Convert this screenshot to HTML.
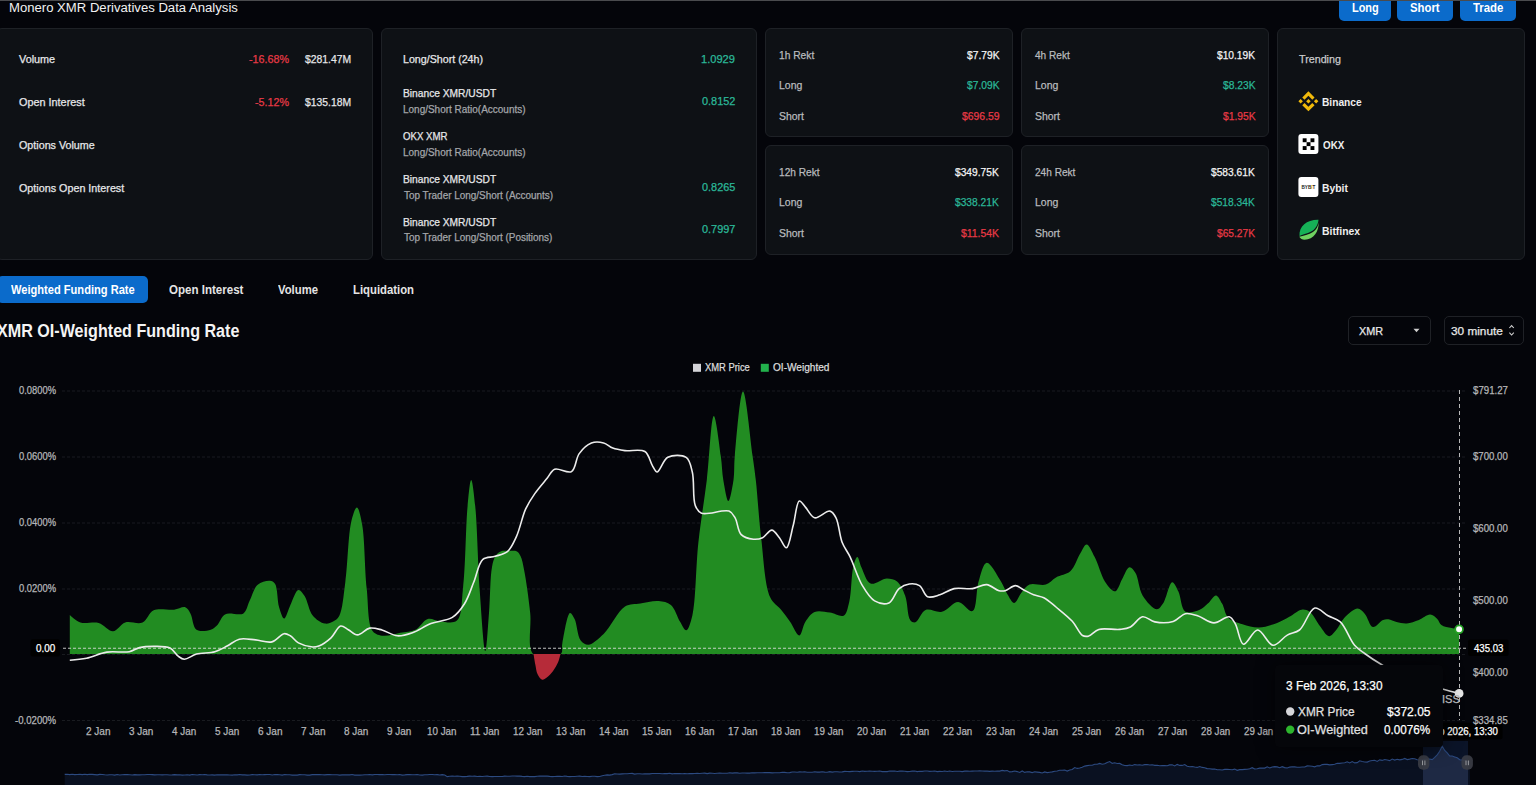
<!DOCTYPE html><html><head><meta charset="utf-8"><title>Monero XMR Derivatives Data Analysis</title><style>
html,body{margin:0;padding:0}
body{width:1536px;height:785px;background:#04050a;overflow:hidden;position:relative;font-family:"Liberation Sans",sans-serif}
.t{position:absolute;white-space:nowrap;line-height:1;transform-origin:0 0}
.card{position:absolute;background:#0e1115;border:1px solid #1e2126;border-radius:6px;box-sizing:border-box}
.btn{position:absolute;background:#0b6bcb;border-radius:5px}
svg{position:absolute;left:0;top:0}
</style></head><body>
<div class="btn" style="left:1339.4px;top:-6px;width:51.5px;height:26.8px"></div>
<div class="btn" style="left:1397.4px;top:-6px;width:55.6px;height:26.8px"></div>
<div class="btn" style="left:1459.8px;top:-6px;width:56.4px;height:26.8px"></div>
<div style="position:absolute;left:0;top:0;width:1536px;height:1px;background:#4a4b4e"></div>
<div class="card" style="left:-4px;top:28px;width:377px;height:232px"></div>
<div class="card" style="left:381px;top:28px;width:376px;height:232px"></div>
<div class="card" style="left:765px;top:28px;width:248px;height:109px"></div>
<div class="card" style="left:1021px;top:28px;width:248px;height:109px"></div>
<div class="card" style="left:765px;top:145px;width:248px;height:110px"></div>
<div class="card" style="left:1021px;top:145px;width:248px;height:110px"></div>
<div class="card" style="left:1277px;top:28px;width:248px;height:232px"></div>
<div style="position:absolute;left:-3px;top:276px;width:151px;height:27px;background:#0b6bcb;border-radius:5px"></div>
<div style="position:absolute;left:1348.4px;top:315.6px;width:82.3px;height:29px;border:1px solid #1f2126;border-radius:5px;box-sizing:border-box"></div>
<div style="position:absolute;left:1444.3px;top:315.6px;width:80.1px;height:29px;border:1px solid #1f2126;border-radius:5px;box-sizing:border-box"></div>
<svg width="1536" height="785" viewBox="0 0 1536 785"><path d="M1413.5 328.8 L1419.5 328.8 L1416.5 332.2 Z" fill="#cfcfcf"/><path d="M1509.4 328 L1511.6 325.6 L1513.8 328 M1509.4 332.6 L1511.6 335 L1513.8 332.6" fill="none" stroke="#cfcfcf" stroke-width="1.1"/><g transform="translate(1298.40,91.30) scale(0.15797)" fill="#f0b90b"><path d="M38.73 53.2l24.59-24.58 24.6 24.6 14.3-14.31L63.32 0 24.42 38.9zM0 63.31l14.3-14.31 14.31 14.31-14.31 14.3zM38.73 73.41l24.59 24.59 24.6-24.6 14.31 14.29-38.9 38.91-38.91-38.88zM98 63.31l14.3-14.31 14.31 14.3-14.31 14.32z"/><path d="M77.83 63.3L63.32 48.78 52.59 59.51l-1.24 1.23-2.54 2.54 14.51 14.5 14.51-14.47z"/></g><rect x="1298.4" y="134" width="20" height="20" rx="3" fill="#ffffff"/><rect x="1302.7" y="138.3" width="3.9" height="3.9" fill="#000"/><rect x="1310.5" y="138.3" width="3.9" height="3.9" fill="#000"/><rect x="1306.6" y="142.2" width="3.9" height="3.9" fill="#000"/><rect x="1302.7" y="146.1" width="3.9" height="3.9" fill="#000"/><rect x="1310.5" y="146.1" width="3.9" height="3.9" fill="#000"/><rect x="1298.4" y="177" width="20" height="20" rx="3" fill="#ffffff"/><text x="1308.4" y="189" font-family="Liberation Sans" font-weight="700" font-size="4.6" fill="#1b1b1b" text-anchor="middle">BYB<tspan fill="#f7a600">I</tspan>T</text><path d="M1299.5 236 C1299 226 1307 219.5 1318.5 219.8 C1318 226.5 1314 231 1308 233 C1304.5 234.2 1301.5 235 1299.5 236 Z" fill="#16b157"/><path d="M1299.2 236.8 C1303 236 1309 234.6 1313 232 C1316.5 229.5 1318.3 226 1318.6 222.5 C1319 231 1314 239.5 1304.5 239.8 C1302.3 239.8 1300.5 238.5 1299.2 236.8 Z" fill="#6fd160"/></svg>
<svg width="1536" height="785" viewBox="0 0 1536 785"><line x1="62" y1="391" x2="1465" y2="391" stroke="#191b20" stroke-width="1" stroke-dasharray="3 2"/><line x1="62" y1="457" x2="1465" y2="457" stroke="#191b20" stroke-width="1" stroke-dasharray="3 2"/><line x1="62" y1="523" x2="1465" y2="523" stroke="#191b20" stroke-width="1" stroke-dasharray="3 2"/><line x1="62" y1="589" x2="1465" y2="589" stroke="#191b20" stroke-width="1" stroke-dasharray="3 2"/><line x1="62" y1="654.5" x2="1465" y2="654.5" stroke="#191b20" stroke-width="1" stroke-dasharray="3 2"/><line x1="62" y1="720.5" x2="1465" y2="720.5" stroke="#191b20" stroke-width="1" stroke-dasharray="3 2"/><path d="M69.8 615.0C69.8 615.0 76.1 621.1 80.4 622.5C85.5 624.2 93.2 621.4 98.7 623.0C104.0 624.5 108.5 631.5 113.0 631.3C117.3 631.1 120.5 624.0 125.2 622.5C130.2 620.9 137.7 624.6 142.5 622.5C147.2 620.4 148.8 612.5 153.7 610.3C159.1 607.8 168.3 610.4 174.1 609.7C178.4 609.2 182.5 606.3 185.3 607.3C187.6 608.1 188.8 610.7 190.4 613.4C192.7 617.4 192.8 627.1 196.5 629.7C199.9 632.0 207.2 630.8 210.8 629.7C213.4 628.9 214.9 627.5 216.9 625.6C219.7 622.9 221.1 616.5 225.0 614.4C229.5 611.9 239.3 616.1 243.4 613.4C246.9 611.1 247.3 605.5 249.5 601.1C252.0 596.0 253.8 588.1 257.7 584.8C261.0 582.0 266.8 580.5 269.9 580.8C272.0 581.0 273.6 581.8 275.0 583.8C277.7 587.7 277.2 600.9 279.1 607.2C280.5 611.8 282.4 618.5 284.2 618.5C286.1 618.5 288.1 609.8 290.3 605.2C292.7 600.2 295.6 590.3 298.4 589.9C300.4 589.6 302.7 593.1 304.6 596.0C307.6 600.5 308.8 610.7 312.7 615.4C315.9 619.4 321.1 622.9 324.9 623.6C327.8 624.1 330.7 622.8 333.1 621.5C335.5 620.2 337.5 619.0 339.2 615.9C342.6 609.7 343.5 595.2 345.3 582.3C347.7 565.0 348.2 534.1 351.4 521.1C353.0 514.7 355.2 507.3 356.9 507.4C358.8 507.5 360.7 516.7 362.1 524.2C364.8 538.6 364.6 569.2 366.7 588.4C368.4 604.1 367.6 624.4 372.8 631.2C375.5 634.7 379.5 635.3 383.5 635.8C388.4 636.3 394.8 633.7 400.3 632.7C405.5 631.7 411.1 631.9 415.6 629.7C420.2 627.4 423.4 620.2 427.8 619.0C431.7 618.0 435.7 621.1 440.1 621.4C445.2 621.8 453.0 623.9 456.9 620.5C462.3 615.8 461.4 601.6 463.0 588.4C465.6 567.3 465.7 525.6 467.6 505.9C468.7 494.8 469.9 479.9 471.2 479.9C472.5 479.9 474.0 494.7 475.2 505.9C477.3 526.1 477.9 565.6 479.8 591.5C481.4 613.2 483.6 651.1 485.3 651.1C486.6 651.1 487.9 626.2 489.0 612.9C490.2 598.3 490.1 577.0 492.0 567.0C492.9 562.0 493.7 558.7 495.5 556.0C497.0 553.8 499.0 552.1 501.2 551.3C503.5 550.4 506.4 551.0 509.0 551.0C511.5 551.0 514.5 550.3 516.5 551.3C518.3 552.2 519.4 553.8 520.5 556.0C522.2 559.3 522.9 564.1 524.1 570.1C526.2 580.5 528.7 598.8 530.2 612.9C531.7 626.7 526.7 647.8 533.3 654.0C538.7 659.0 556.8 657.5 560.8 654.0C563.3 651.8 561.4 647.8 562.3 643.4C563.8 635.8 567.1 613.5 570.0 612.9C571.4 612.6 573.2 616.2 574.6 619.0C577.0 623.8 577.4 636.2 580.7 640.4C582.7 643.0 585.4 644.8 588.3 644.7C592.6 644.5 598.4 638.9 603.6 634.0C610.6 627.3 617.6 611.1 625.0 606.5C630.0 603.4 634.9 604.3 640.3 603.4C646.1 602.4 653.2 600.5 658.7 601.0C663.2 601.4 667.5 602.2 670.9 605.0C675.0 608.4 677.2 617.2 680.1 621.8C682.2 625.2 684.3 630.5 686.2 630.3C688.5 630.0 690.6 622.6 692.3 615.7C695.9 600.8 695.8 565.7 698.4 542.3C700.8 520.7 704.2 500.9 706.8 480.0C709.4 458.8 711.1 416.1 713.8 416.0C715.9 415.9 719.2 444.3 720.8 456.0C722.1 465.0 722.0 472.3 723.3 480.0C724.6 487.3 726.7 501.0 728.4 501.0C730.1 501.0 732.4 487.3 733.5 480.0C734.6 472.3 733.9 465.9 734.8 456.0C736.3 439.7 740.0 391.5 743.0 391.5C746.0 391.5 750.3 439.7 752.6 456.0C754.0 465.9 754.7 470.3 755.8 480.0C757.5 494.8 758.7 517.1 761.0 536.2C763.4 556.2 764.6 585.2 770.2 597.3C773.1 603.5 777.5 605.4 780.9 609.5C784.2 613.5 787.1 617.5 790.1 621.8C793.2 626.2 796.7 635.7 799.3 635.5C801.8 635.3 802.7 625.8 805.4 621.8C807.9 618.0 810.7 613.6 814.6 612.0C818.8 610.3 825.0 612.0 829.9 612.6C834.6 613.2 840.4 617.4 843.6 615.7C846.9 614.0 847.7 607.7 849.2 601.9C851.5 593.1 851.2 575.3 853.2 567.3C854.3 562.8 855.9 557.1 857.3 557.1C858.7 557.1 859.6 563.6 861.4 567.3C863.7 572.2 866.2 581.9 870.6 583.6C874.8 585.3 882.1 578.5 886.9 578.5C890.7 578.5 894.2 579.2 897.1 581.5C900.6 584.3 903.1 590.2 905.2 595.8C907.8 602.7 907.3 616.6 910.3 620.2C911.7 621.9 913.6 622.8 915.4 622.3C918.5 621.5 921.2 611.8 925.6 610.0C930.0 608.2 936.7 612.9 941.9 611.7C947.6 610.4 953.0 601.8 958.2 601.9C963.1 602.0 969.1 612.5 972.5 611.1C977.0 609.2 975.9 590.1 978.6 581.5C980.8 574.4 983.2 563.2 986.7 562.8C990.5 562.3 997.4 575.8 1001.0 581.5C1003.7 585.9 1004.8 590.0 1007.1 593.7C1009.2 597.1 1011.9 602.9 1014.2 602.9C1016.6 602.8 1018.8 595.8 1021.4 592.7C1023.9 589.7 1026.0 586.1 1029.5 584.6C1033.7 582.8 1041.2 586.1 1045.8 584.6C1049.8 583.3 1052.2 579.5 1056.0 577.4C1060.3 575.0 1066.4 574.8 1070.3 571.3C1074.8 567.2 1077.4 557.9 1080.5 553.0C1082.7 549.5 1084.5 544.3 1086.6 544.4C1089.2 544.5 1092.1 552.0 1094.7 557.1C1098.2 563.8 1101.1 575.5 1104.9 581.5C1107.5 585.6 1110.8 589.6 1113.1 590.7C1114.2 591.2 1115.1 591.5 1116.1 590.9C1118.2 589.7 1120.0 583.0 1122.2 579.1C1124.4 575.1 1126.9 567.6 1129.4 567.3C1131.4 567.0 1133.7 570.1 1135.5 573.0C1138.5 577.8 1138.8 589.2 1142.6 595.4C1146.1 601.1 1153.1 609.3 1156.9 609.3C1159.3 609.3 1161.0 606.4 1163.0 603.6C1166.3 598.9 1169.2 582.5 1172.2 582.2C1174.3 582.0 1176.4 587.5 1178.3 591.3C1181.0 596.6 1181.1 609.1 1185.4 611.7C1188.9 613.8 1195.8 611.3 1199.7 609.7C1203.0 608.3 1205.2 605.9 1207.8 603.6C1210.6 601.2 1213.6 595.2 1216.0 595.4C1218.3 595.6 1220.2 600.4 1222.1 603.6C1224.4 607.6 1224.8 614.4 1228.2 617.8C1231.6 621.3 1237.5 622.7 1242.5 624.3C1247.7 626.0 1253.2 627.7 1258.8 627.6C1264.7 627.4 1271.7 624.9 1277.1 622.9C1281.7 621.2 1285.3 619.0 1289.3 616.8C1293.4 614.6 1297.8 610.2 1301.6 609.7C1304.5 609.3 1307.1 610.0 1309.7 611.7C1313.4 614.2 1316.5 621.7 1319.9 626.0C1322.9 629.8 1326.1 636.0 1329.1 636.2C1331.5 636.3 1333.9 632.6 1336.2 630.0C1339.1 626.8 1340.9 621.3 1344.4 617.8C1348.0 614.1 1353.9 608.6 1357.6 608.6C1360.3 608.6 1362.5 611.3 1364.7 613.7C1367.7 616.9 1369.6 626.3 1372.9 627.0C1375.8 627.6 1380.1 621.0 1383.1 619.9C1385.0 619.2 1386.5 619.1 1388.4 619.3C1390.8 619.6 1393.6 621.3 1396.5 622.0C1399.7 622.7 1403.2 623.6 1406.7 623.4C1410.6 623.1 1415.0 621.5 1418.9 620.0C1422.8 618.5 1426.9 614.3 1430.2 614.5C1432.9 614.6 1435.4 617.1 1437.3 618.9C1439.1 620.6 1439.4 623.6 1441.4 625.1C1443.8 626.9 1448.4 627.4 1451.6 628.1C1454.3 628.7 1459.1 629.1 1459.1 629.1 L1459.1 654 L69.8 654 Z" fill="#228c22"/><path d="M533.6 654.0C533.6 654.0 534.6 661.0 535.3 664.4C536.0 667.8 536.3 671.6 537.6 674.3C538.7 676.5 540.5 679.4 542.2 679.7C543.6 680.0 545.3 678.5 546.8 677.4C548.8 676.0 551.1 673.7 552.9 671.3C554.9 668.7 556.9 665.1 558.2 662.1C559.3 659.4 560.5 654.0 560.5 654.0 Z" fill="#b62b39"/><path d="M69.8 660.2C69.8 660.2 80.7 659.4 86.5 658.2C93.0 656.8 99.9 653.2 106.9 652.1C114.1 651.0 123.4 652.9 129.3 651.7C133.5 650.9 135.7 648.5 139.5 647.6C143.8 646.6 148.8 646.4 153.7 646.4C158.9 646.4 165.8 646.0 170.0 648.0C173.6 649.7 175.5 654.3 178.2 656.2C180.3 657.7 181.9 659.1 184.3 659.2C187.6 659.3 191.9 655.3 196.5 654.1C201.9 652.6 209.5 653.3 214.9 651.7C219.5 650.4 223.1 648.1 227.1 646.0C231.2 643.9 234.8 640.3 239.3 639.2C244.2 638.0 250.2 639.5 255.6 639.9C261.0 640.4 267.0 643.1 271.9 641.9C276.5 640.8 280.7 634.1 284.2 633.7C286.5 633.4 288.2 634.6 290.3 635.8C293.0 637.3 295.1 641.1 298.4 642.9C302.3 645.0 308.9 646.8 312.7 647.0C315.1 647.1 316.5 646.9 318.8 646.0C322.3 644.6 327.4 641.1 331.0 637.8C334.7 634.4 337.4 626.7 340.7 626.0C343.2 625.5 345.7 628.3 348.3 629.7C351.2 631.2 354.2 634.9 357.5 634.9C361.3 634.9 365.5 628.9 369.7 628.1C373.7 627.4 377.7 628.9 382.0 630.0C386.9 631.3 392.1 635.4 397.3 635.8C402.3 636.2 407.3 634.5 412.5 632.7C418.5 630.7 424.4 626.1 430.9 623.6C437.7 621.0 446.6 621.0 452.3 617.4C457.5 614.1 461.1 609.1 464.5 603.7C468.4 597.6 470.7 589.6 473.7 582.3C476.8 574.8 478.3 563.4 482.9 559.4C486.2 556.5 491.1 557.6 495.1 556.3C499.2 555.0 503.9 554.5 507.3 551.7C511.3 548.4 513.7 542.4 516.5 536.4C520.0 528.7 522.2 516.6 525.7 508.9C528.5 502.9 531.3 498.6 534.8 493.6C538.4 488.4 543.5 482.7 547.1 478.3C549.9 474.9 551.2 470.5 554.7 469.2C558.9 467.6 567.4 473.9 571.5 471.6C575.9 469.2 575.6 458.5 579.2 453.6C582.4 449.1 587.0 444.6 591.4 442.9C595.2 441.5 599.9 441.9 603.6 442.9C607.0 443.8 609.4 446.8 612.8 448.1C616.5 449.5 620.4 450.0 625.0 450.6C630.8 451.3 640.3 448.6 644.9 451.5C649.1 454.1 650.1 462.2 652.5 465.9C654.1 468.4 655.3 472.0 657.1 472.0C659.9 472.0 663.0 459.8 667.8 457.3C672.7 454.8 682.1 454.6 686.2 457.3C690.0 459.8 690.8 466.0 692.3 472.0C694.5 480.8 692.5 498.6 695.3 505.6C696.8 509.4 698.2 511.8 701.5 513.2C707.1 515.6 723.4 508.9 729.0 511.1C732.2 512.4 733.3 514.8 735.1 517.8C737.6 522.0 737.7 531.1 741.2 534.6C744.2 537.6 749.6 538.8 753.4 539.2C756.6 539.5 759.7 539.0 762.6 537.7C765.9 536.2 768.9 530.0 771.8 530.1C774.5 530.2 777.0 534.9 779.4 537.7C781.9 540.7 784.4 548.1 786.4 547.8C789.2 547.4 791.1 533.1 793.2 525.5C795.4 517.6 796.4 501.8 799.3 501.0C801.0 500.5 803.2 504.7 805.4 507.1C808.2 510.1 810.8 516.9 814.6 517.8C818.8 518.8 826.1 510.3 829.9 511.1C832.7 511.7 834.3 514.6 836.0 517.8C838.9 523.2 839.4 535.3 842.1 542.3C844.3 548.0 847.4 551.3 850.2 557.1C854.0 565.0 857.7 577.8 862.4 585.6C866.1 591.8 869.7 598.1 874.6 600.9C878.8 603.3 884.9 604.6 888.9 602.9C893.3 601.0 895.2 591.8 899.1 588.6C902.2 586.1 905.8 584.5 909.3 584.0C912.6 583.6 916.6 583.8 919.5 585.6C922.9 587.7 924.1 595.3 927.6 596.8C931.0 598.2 935.7 596.0 939.9 594.8C944.5 593.4 948.9 589.7 954.1 588.6C959.7 587.4 966.8 589.4 972.5 588.6C977.6 587.9 982.2 584.2 986.7 584.6C991.0 585.0 995.5 589.9 999.0 590.7C1001.3 591.2 1002.9 591.2 1005.1 590.7C1008.1 590.0 1012.1 585.6 1015.3 585.6C1018.2 585.6 1020.5 588.3 1023.4 589.7C1026.6 591.3 1030.1 593.4 1033.6 594.8C1036.9 596.1 1040.4 596.1 1043.8 597.8C1047.9 599.8 1051.7 603.5 1056.0 607.0C1061.1 611.2 1067.7 616.3 1072.3 621.3C1076.4 625.8 1079.1 633.5 1082.5 635.5C1084.5 636.7 1086.4 636.6 1088.6 636.1C1091.7 635.3 1094.6 630.7 1098.8 629.4C1104.4 627.7 1114.2 630.1 1120.0 629.4C1124.1 628.9 1127.0 628.7 1130.4 627.0C1134.6 624.9 1138.3 617.4 1142.6 616.8C1146.5 616.2 1150.2 621.0 1154.8 621.9C1160.2 622.9 1167.9 623.1 1173.2 621.5C1177.9 620.1 1181.2 614.6 1185.4 613.7C1189.3 612.9 1193.3 614.5 1197.6 615.8C1202.7 617.3 1208.5 622.8 1213.9 622.9C1219.1 623.0 1225.5 615.9 1229.2 616.8C1232.0 617.5 1233.4 620.7 1235.3 623.9C1238.3 628.8 1239.6 643.5 1243.5 644.3C1247.2 645.0 1252.9 630.0 1257.7 630.0C1262.7 630.0 1267.8 644.9 1273.0 645.3C1277.7 645.7 1282.6 637.7 1287.3 635.1C1291.4 632.8 1295.6 633.1 1299.5 630.0C1305.0 625.6 1309.3 609.2 1314.8 608.0C1319.0 607.1 1323.7 613.4 1328.1 615.8C1332.2 618.0 1336.5 618.4 1340.3 621.9C1345.7 626.8 1349.8 639.8 1354.6 645.3C1357.9 649.1 1360.9 650.7 1364.7 653.5C1369.4 657.0 1374.7 660.5 1381.0 664.3C1389.2 669.2 1399.7 675.9 1410.0 680.0C1420.5 684.2 1434.3 686.9 1443.4 689.3C1449.6 691.0 1459.1 693.4 1459.1 693.4" fill="none" stroke="#ececec" stroke-width="1.6" stroke-linejoin="round"/><line x1="63" y1="648.3" x2="1466" y2="648.3" stroke="#e0e0e0" stroke-opacity="0.85" stroke-width="1.1" stroke-dasharray="3 2"/><line x1="1459.5" y1="390" x2="1459.5" y2="720" stroke="#b8b8b8" stroke-width="1" stroke-dasharray="4 3"/><circle cx="1459.1" cy="629.3" r="3.9" fill="#ffffff" stroke="#23a023" stroke-width="1.8"/><circle cx="1459.1" cy="693.4" r="4.4" fill="#e6e6e6"/><rect x="693" y="363.8" width="8" height="8" fill="#d4d4d8"/><rect x="760.8" y="363.8" width="8" height="8" fill="#22b14c"/><path d="M64.7 774.4 L67.2 774.3 L69.7 774.6 L72.2 774.2 L74.7 774.6 L77.2 774.5 L79.7 774.3 L82.2 774.6 L84.7 774.3 L87.2 774.6 L89.7 774.3 L92.2 774.4 L94.7 774.6 L97.2 774.9 L99.7 774.4 L102.2 774.5 L104.7 774.8 L107.2 775.0 L109.7 774.8 L112.2 774.7 L114.7 775.1 L117.2 774.5 L119.7 775.0 L122.2 774.7 L124.7 774.6 L127.2 774.5 L129.7 774.7 L132.2 775.0 L134.7 774.6 L137.2 774.9 L139.7 774.9 L142.2 774.7 L144.7 774.8 L147.2 774.5 L149.7 774.5 L152.2 774.6 L154.7 774.9 L157.2 774.7 L159.7 774.7 L162.2 774.9 L164.7 774.8 L167.2 774.7 L169.7 775.0 L172.2 774.9 L174.7 774.6 L177.2 774.9 L179.7 774.8 L182.2 775.1 L184.7 775.0 L187.2 774.7 L189.7 775.1 L192.2 774.5 L194.7 774.7 L197.2 775.0 L199.7 774.6 L202.2 774.8 L204.7 774.5 L207.2 774.9 L209.7 775.0 L212.2 774.9 L214.7 775.1 L217.2 774.7 L219.7 774.9 L222.2 774.9 L224.7 774.9 L227.2 774.8 L229.7 775.0 L232.2 775.1 L234.7 774.8 L237.2 774.9 L239.7 774.5 L242.2 774.9 L244.7 774.9 L247.2 775.1 L249.7 775.0 L252.2 774.6 L254.7 774.7 L257.2 774.9 L259.7 774.5 L262.2 774.8 L264.7 774.6 L267.2 774.5 L269.7 774.5 L272.2 775.0 L274.7 774.5 L277.2 774.6 L279.7 774.7 L282.2 775.1 L284.7 774.5 L287.2 774.8 L289.7 774.8 L292.2 775.1 L294.7 775.0 L297.2 775.1 L299.7 774.6 L302.2 774.7 L304.7 774.7 L307.2 775.1 L309.7 775.1 L312.2 774.6 L314.7 774.6 L317.2 774.6 L319.7 774.6 L322.2 774.8 L324.7 774.9 L327.2 774.6 L329.7 774.5 L332.2 774.7 L334.7 774.7 L337.2 774.8 L339.7 775.1 L342.2 774.9 L344.7 774.8 L347.2 774.9 L349.7 774.9 L352.2 774.5 L354.7 775.1 L357.2 775.0 L359.7 775.1 L362.2 775.0 L364.7 774.7 L367.2 774.7 L369.7 774.5 L372.2 774.9 L374.7 774.5 L377.2 774.5 L379.7 774.6 L382.2 774.6 L384.7 774.7 L387.2 774.5 L389.7 774.5 L392.2 774.6 L394.7 774.5 L397.2 774.7 L399.7 774.5 L402.2 775.1 L404.7 774.9 L407.2 774.6 L409.7 774.6 L412.2 774.7 L414.7 774.7 L417.2 774.5 L419.7 775.0 L422.2 775.1 L424.7 774.8 L427.2 774.8 L429.7 774.5 L432.2 774.5 L434.7 774.7 L437.2 774.6 L439.7 775.0 L442.2 774.6 L444.7 775.0 L447.2 776.6 L449.7 776.3 L452.2 776.1 L454.7 776.3 L457.2 776.0 L459.7 776.3 L462.2 776.6 L464.7 776.6 L467.2 776.4 L469.7 776.1 L472.2 776.2 L474.7 776.1 L477.2 776.5 L479.7 776.3 L482.2 776.5 L484.7 776.2 L487.2 776.1 L489.7 776.5 L492.2 776.6 L494.7 776.5 L497.2 776.5 L499.7 776.5 L502.2 776.5 L504.7 776.1 L507.2 776.3 L509.7 776.2 L512.2 776.0 L514.7 776.0 L517.2 776.1 L519.7 776.1 L522.2 776.4 L524.7 776.6 L527.2 776.3 L529.7 776.6 L532.2 776.6 L534.7 776.6 L537.2 776.2 L539.7 776.1 L542.2 776.1 L544.7 776.1 L547.2 776.1 L549.7 776.4 L552.2 776.6 L554.7 776.5 L557.2 776.3 L559.7 776.4 L562.2 776.5 L564.7 776.0 L567.2 776.4 L569.7 776.6 L572.2 776.5 L574.7 776.5 L577.2 776.3 L579.7 776.1 L582.2 776.5 L584.7 776.2 L587.2 776.5 L589.7 776.6 L592.2 776.2 L594.7 776.2 L597.2 776.6 L599.7 776.5 L602.2 775.7 L604.7 775.3 L607.2 774.9 L609.7 775.1 L612.2 774.6 L614.7 773.8 L617.2 774.0 L619.7 774.1 L622.2 773.9 L624.7 773.7 L627.2 773.8 L629.7 773.5 L632.2 773.4 L634.7 774.1 L637.2 773.8 L639.7 773.7 L642.2 774.0 L644.7 773.7 L647.2 773.9 L649.7 773.9 L652.2 773.5 L654.7 773.5 L657.2 773.5 L659.7 773.5 L662.2 773.7 L664.7 773.5 L667.2 773.6 L669.7 773.3 L672.2 773.9 L674.7 773.5 L677.2 773.6 L679.7 773.6 L682.2 773.8 L684.7 773.5 L687.2 773.8 L689.7 773.5 L692.2 773.6 L694.7 773.5 L697.2 773.2 L699.7 773.5 L702.2 773.2 L704.7 773.1 L707.2 773.6 L709.7 773.1 L712.2 773.3 L714.7 773.5 L717.2 773.3 L719.7 773.1 L722.2 773.2 L724.7 773.2 L727.2 773.3 L729.7 772.8 L732.2 773.1 L734.7 772.9 L737.2 772.9 L739.7 773.2 L742.2 773.0 L744.7 773.0 L747.2 773.1 L749.7 773.1 L752.2 772.8 L754.7 772.9 L757.2 772.8 L759.7 772.7 L762.2 772.8 L764.7 772.6 L767.2 772.6 L769.7 772.6 L772.2 772.9 L774.7 772.7 L777.2 772.8 L779.7 772.8 L782.2 772.3 L784.7 772.4 L787.2 772.7 L789.7 772.6 L792.2 772.0 L794.7 772.0 L797.2 772.2 L799.7 771.9 L802.2 772.0 L804.7 771.8 L807.2 772.2 L809.7 772.3 L812.2 772.3 L814.7 771.8 L817.2 772.1 L819.7 772.1 L822.2 771.7 L824.7 772.1 L827.2 772.2 L829.7 771.6 L832.2 772.1 L834.7 771.7 L837.2 771.7 L839.7 772.0 L842.2 771.9 L844.7 771.4 L847.2 771.5 L849.7 771.6 L852.2 771.4 L854.7 771.3 L857.2 771.3 L859.7 771.6 L862.2 771.0 L864.7 771.4 L867.2 771.3 L869.7 771.0 L872.2 771.2 L874.7 771.4 L877.2 771.3 L879.7 771.0 L882.2 771.6 L884.7 771.5 L887.2 771.6 L889.7 771.0 L892.2 771.1 L894.7 771.0 L897.2 771.5 L899.7 771.1 L902.2 771.0 L904.7 771.2 L907.2 771.6 L909.7 771.5 L912.2 771.1 L914.7 771.0 L917.2 771.6 L919.7 771.3 L922.2 771.4 L924.7 771.0 L927.2 771.0 L929.7 771.4 L932.2 771.2 L934.7 771.0 L937.2 771.6 L939.7 771.4 L942.2 771.5 L944.7 771.0 L947.2 771.5 L949.7 771.0 L952.2 771.5 L954.7 771.2 L957.2 771.2 L959.7 771.3 L962.2 771.6 L964.7 771.1 L967.2 771.0 L969.7 771.3 L972.2 771.1 L974.7 771.0 L977.2 771.0 L979.7 770.9 L982.2 771.0 L984.7 771.1 L987.2 771.1 L989.7 771.4 L992.2 771.1 L994.7 771.3 L997.2 771.0 L999.7 771.1 L1002.2 770.4 L1004.7 770.9 L1007.2 770.5 L1009.7 771.9 L1012.2 771.6 L1014.7 771.0 L1017.2 771.6 L1019.7 772.5 L1022.2 771.0 L1024.7 772.4 L1027.2 771.7 L1029.7 771.9 L1032.2 772.6 L1034.7 771.8 L1037.2 772.1 L1039.7 772.4 L1042.2 773.0 L1044.7 771.9 L1047.2 772.6 L1049.7 772.2 L1052.2 771.9 L1054.7 771.3 L1057.2 771.0 L1059.7 770.3 L1062.2 770.3 L1064.7 770.0 L1067.2 771.1 L1069.7 770.0 L1072.2 769.5 L1074.7 767.6 L1077.2 768.4 L1079.7 768.0 L1082.2 767.2 L1084.7 766.1 L1087.2 765.6 L1089.7 765.3 L1092.2 765.2 L1094.7 764.2 L1097.2 764.2 L1099.7 763.4 L1102.2 764.2 L1104.7 763.7 L1107.2 762.4 L1109.7 761.5 L1112.2 763.4 L1114.7 762.8 L1117.2 763.5 L1119.7 763.4 L1122.2 764.7 L1124.7 765.5 L1127.2 765.6 L1129.7 765.0 L1132.2 765.5 L1134.7 764.6 L1137.2 765.0 L1139.7 764.7 L1142.2 765.2 L1144.7 764.6 L1147.2 764.5 L1149.7 765.0 L1152.2 764.8 L1154.7 765.4 L1157.2 765.3 L1159.7 765.7 L1162.2 765.5 L1164.7 765.6 L1167.2 765.8 L1169.7 764.9 L1172.2 764.8 L1174.7 765.9 L1177.2 764.4 L1179.7 765.4 L1182.2 765.4 L1184.7 764.6 L1187.2 766.3 L1189.7 766.7 L1192.2 766.5 L1194.7 767.0 L1197.2 767.4 L1199.7 766.5 L1202.2 767.4 L1204.7 767.7 L1207.2 768.6 L1209.7 768.8 L1212.2 769.1 L1214.7 769.0 L1217.2 769.8 L1219.7 769.7 L1222.2 770.0 L1224.7 769.4 L1227.2 769.4 L1229.7 769.5 L1232.2 769.8 L1234.7 769.1 L1237.2 770.3 L1239.7 769.6 L1242.2 769.6 L1244.7 769.4 L1247.2 769.3 L1249.7 768.8 L1252.2 767.7 L1254.7 769.0 L1257.2 768.7 L1259.7 768.1 L1262.2 768.0 L1264.7 768.1 L1267.2 766.8 L1269.7 767.9 L1272.2 767.0 L1274.7 766.6 L1277.2 766.9 L1279.7 767.7 L1282.2 766.7 L1284.7 767.6 L1287.2 768.0 L1289.7 767.1 L1292.2 766.8 L1294.7 766.9 L1297.2 767.2 L1299.7 767.3 L1302.2 767.0 L1304.7 767.0 L1307.2 765.9 L1309.7 766.0 L1312.2 766.2 L1314.7 766.8 L1317.2 765.7 L1319.7 765.9 L1322.2 764.6 L1324.7 764.4 L1327.2 764.4 L1329.7 764.9 L1332.2 764.6 L1334.7 764.3 L1337.2 763.3 L1339.7 763.4 L1342.2 763.0 L1344.7 762.7 L1347.2 761.8 L1349.7 763.0 L1352.2 761.6 L1354.7 762.9 L1357.2 762.6 L1359.7 760.8 L1362.2 761.5 L1364.7 762.0 L1367.2 762.1 L1369.7 761.0 L1372.2 760.5 L1374.7 760.2 L1377.2 761.4 L1379.7 759.9 L1382.2 760.4 L1384.7 759.5 L1387.2 760.0 L1389.7 760.6 L1392.2 759.0 L1394.7 760.1 L1397.2 759.3 L1399.7 759.9 L1402.2 759.4 L1404.7 758.4 L1407.2 759.6 L1409.7 759.1 L1412.2 758.5 L1414.7 758.7 L1417.2 759.8 L1419.7 760.0 L1422.2 759.9 L1424.7 759.3 L1427.2 759.4 L1429.7 759.0 L1432.2 759.6 L1434.7 757.4 L1437.2 754.9 L1439.7 751.3 L1442.2 746.2 L1444.7 750.5 L1447.2 752.9 L1449.7 756.0 L1452.2 756.0 L1454.7 756.9 L1457.2 757.8 L1459.7 759.8 L1462.2 760.0 L1464.7 760.6 L1467.2 761.8 L1469.7 761.6 L1470 785 L64.7 785 Z" fill="#0a1121"/><clipPath id="selc"><rect x="1423" y="740" width="45" height="45"/></clipPath><rect x="1423" y="741" width="45" height="44" fill="#0b1428"/><path d="M64.7 774.4 L67.2 774.3 L69.7 774.6 L72.2 774.2 L74.7 774.6 L77.2 774.5 L79.7 774.3 L82.2 774.6 L84.7 774.3 L87.2 774.6 L89.7 774.3 L92.2 774.4 L94.7 774.6 L97.2 774.9 L99.7 774.4 L102.2 774.5 L104.7 774.8 L107.2 775.0 L109.7 774.8 L112.2 774.7 L114.7 775.1 L117.2 774.5 L119.7 775.0 L122.2 774.7 L124.7 774.6 L127.2 774.5 L129.7 774.7 L132.2 775.0 L134.7 774.6 L137.2 774.9 L139.7 774.9 L142.2 774.7 L144.7 774.8 L147.2 774.5 L149.7 774.5 L152.2 774.6 L154.7 774.9 L157.2 774.7 L159.7 774.7 L162.2 774.9 L164.7 774.8 L167.2 774.7 L169.7 775.0 L172.2 774.9 L174.7 774.6 L177.2 774.9 L179.7 774.8 L182.2 775.1 L184.7 775.0 L187.2 774.7 L189.7 775.1 L192.2 774.5 L194.7 774.7 L197.2 775.0 L199.7 774.6 L202.2 774.8 L204.7 774.5 L207.2 774.9 L209.7 775.0 L212.2 774.9 L214.7 775.1 L217.2 774.7 L219.7 774.9 L222.2 774.9 L224.7 774.9 L227.2 774.8 L229.7 775.0 L232.2 775.1 L234.7 774.8 L237.2 774.9 L239.7 774.5 L242.2 774.9 L244.7 774.9 L247.2 775.1 L249.7 775.0 L252.2 774.6 L254.7 774.7 L257.2 774.9 L259.7 774.5 L262.2 774.8 L264.7 774.6 L267.2 774.5 L269.7 774.5 L272.2 775.0 L274.7 774.5 L277.2 774.6 L279.7 774.7 L282.2 775.1 L284.7 774.5 L287.2 774.8 L289.7 774.8 L292.2 775.1 L294.7 775.0 L297.2 775.1 L299.7 774.6 L302.2 774.7 L304.7 774.7 L307.2 775.1 L309.7 775.1 L312.2 774.6 L314.7 774.6 L317.2 774.6 L319.7 774.6 L322.2 774.8 L324.7 774.9 L327.2 774.6 L329.7 774.5 L332.2 774.7 L334.7 774.7 L337.2 774.8 L339.7 775.1 L342.2 774.9 L344.7 774.8 L347.2 774.9 L349.7 774.9 L352.2 774.5 L354.7 775.1 L357.2 775.0 L359.7 775.1 L362.2 775.0 L364.7 774.7 L367.2 774.7 L369.7 774.5 L372.2 774.9 L374.7 774.5 L377.2 774.5 L379.7 774.6 L382.2 774.6 L384.7 774.7 L387.2 774.5 L389.7 774.5 L392.2 774.6 L394.7 774.5 L397.2 774.7 L399.7 774.5 L402.2 775.1 L404.7 774.9 L407.2 774.6 L409.7 774.6 L412.2 774.7 L414.7 774.7 L417.2 774.5 L419.7 775.0 L422.2 775.1 L424.7 774.8 L427.2 774.8 L429.7 774.5 L432.2 774.5 L434.7 774.7 L437.2 774.6 L439.7 775.0 L442.2 774.6 L444.7 775.0 L447.2 776.6 L449.7 776.3 L452.2 776.1 L454.7 776.3 L457.2 776.0 L459.7 776.3 L462.2 776.6 L464.7 776.6 L467.2 776.4 L469.7 776.1 L472.2 776.2 L474.7 776.1 L477.2 776.5 L479.7 776.3 L482.2 776.5 L484.7 776.2 L487.2 776.1 L489.7 776.5 L492.2 776.6 L494.7 776.5 L497.2 776.5 L499.7 776.5 L502.2 776.5 L504.7 776.1 L507.2 776.3 L509.7 776.2 L512.2 776.0 L514.7 776.0 L517.2 776.1 L519.7 776.1 L522.2 776.4 L524.7 776.6 L527.2 776.3 L529.7 776.6 L532.2 776.6 L534.7 776.6 L537.2 776.2 L539.7 776.1 L542.2 776.1 L544.7 776.1 L547.2 776.1 L549.7 776.4 L552.2 776.6 L554.7 776.5 L557.2 776.3 L559.7 776.4 L562.2 776.5 L564.7 776.0 L567.2 776.4 L569.7 776.6 L572.2 776.5 L574.7 776.5 L577.2 776.3 L579.7 776.1 L582.2 776.5 L584.7 776.2 L587.2 776.5 L589.7 776.6 L592.2 776.2 L594.7 776.2 L597.2 776.6 L599.7 776.5 L602.2 775.7 L604.7 775.3 L607.2 774.9 L609.7 775.1 L612.2 774.6 L614.7 773.8 L617.2 774.0 L619.7 774.1 L622.2 773.9 L624.7 773.7 L627.2 773.8 L629.7 773.5 L632.2 773.4 L634.7 774.1 L637.2 773.8 L639.7 773.7 L642.2 774.0 L644.7 773.7 L647.2 773.9 L649.7 773.9 L652.2 773.5 L654.7 773.5 L657.2 773.5 L659.7 773.5 L662.2 773.7 L664.7 773.5 L667.2 773.6 L669.7 773.3 L672.2 773.9 L674.7 773.5 L677.2 773.6 L679.7 773.6 L682.2 773.8 L684.7 773.5 L687.2 773.8 L689.7 773.5 L692.2 773.6 L694.7 773.5 L697.2 773.2 L699.7 773.5 L702.2 773.2 L704.7 773.1 L707.2 773.6 L709.7 773.1 L712.2 773.3 L714.7 773.5 L717.2 773.3 L719.7 773.1 L722.2 773.2 L724.7 773.2 L727.2 773.3 L729.7 772.8 L732.2 773.1 L734.7 772.9 L737.2 772.9 L739.7 773.2 L742.2 773.0 L744.7 773.0 L747.2 773.1 L749.7 773.1 L752.2 772.8 L754.7 772.9 L757.2 772.8 L759.7 772.7 L762.2 772.8 L764.7 772.6 L767.2 772.6 L769.7 772.6 L772.2 772.9 L774.7 772.7 L777.2 772.8 L779.7 772.8 L782.2 772.3 L784.7 772.4 L787.2 772.7 L789.7 772.6 L792.2 772.0 L794.7 772.0 L797.2 772.2 L799.7 771.9 L802.2 772.0 L804.7 771.8 L807.2 772.2 L809.7 772.3 L812.2 772.3 L814.7 771.8 L817.2 772.1 L819.7 772.1 L822.2 771.7 L824.7 772.1 L827.2 772.2 L829.7 771.6 L832.2 772.1 L834.7 771.7 L837.2 771.7 L839.7 772.0 L842.2 771.9 L844.7 771.4 L847.2 771.5 L849.7 771.6 L852.2 771.4 L854.7 771.3 L857.2 771.3 L859.7 771.6 L862.2 771.0 L864.7 771.4 L867.2 771.3 L869.7 771.0 L872.2 771.2 L874.7 771.4 L877.2 771.3 L879.7 771.0 L882.2 771.6 L884.7 771.5 L887.2 771.6 L889.7 771.0 L892.2 771.1 L894.7 771.0 L897.2 771.5 L899.7 771.1 L902.2 771.0 L904.7 771.2 L907.2 771.6 L909.7 771.5 L912.2 771.1 L914.7 771.0 L917.2 771.6 L919.7 771.3 L922.2 771.4 L924.7 771.0 L927.2 771.0 L929.7 771.4 L932.2 771.2 L934.7 771.0 L937.2 771.6 L939.7 771.4 L942.2 771.5 L944.7 771.0 L947.2 771.5 L949.7 771.0 L952.2 771.5 L954.7 771.2 L957.2 771.2 L959.7 771.3 L962.2 771.6 L964.7 771.1 L967.2 771.0 L969.7 771.3 L972.2 771.1 L974.7 771.0 L977.2 771.0 L979.7 770.9 L982.2 771.0 L984.7 771.1 L987.2 771.1 L989.7 771.4 L992.2 771.1 L994.7 771.3 L997.2 771.0 L999.7 771.1 L1002.2 770.4 L1004.7 770.9 L1007.2 770.5 L1009.7 771.9 L1012.2 771.6 L1014.7 771.0 L1017.2 771.6 L1019.7 772.5 L1022.2 771.0 L1024.7 772.4 L1027.2 771.7 L1029.7 771.9 L1032.2 772.6 L1034.7 771.8 L1037.2 772.1 L1039.7 772.4 L1042.2 773.0 L1044.7 771.9 L1047.2 772.6 L1049.7 772.2 L1052.2 771.9 L1054.7 771.3 L1057.2 771.0 L1059.7 770.3 L1062.2 770.3 L1064.7 770.0 L1067.2 771.1 L1069.7 770.0 L1072.2 769.5 L1074.7 767.6 L1077.2 768.4 L1079.7 768.0 L1082.2 767.2 L1084.7 766.1 L1087.2 765.6 L1089.7 765.3 L1092.2 765.2 L1094.7 764.2 L1097.2 764.2 L1099.7 763.4 L1102.2 764.2 L1104.7 763.7 L1107.2 762.4 L1109.7 761.5 L1112.2 763.4 L1114.7 762.8 L1117.2 763.5 L1119.7 763.4 L1122.2 764.7 L1124.7 765.5 L1127.2 765.6 L1129.7 765.0 L1132.2 765.5 L1134.7 764.6 L1137.2 765.0 L1139.7 764.7 L1142.2 765.2 L1144.7 764.6 L1147.2 764.5 L1149.7 765.0 L1152.2 764.8 L1154.7 765.4 L1157.2 765.3 L1159.7 765.7 L1162.2 765.5 L1164.7 765.6 L1167.2 765.8 L1169.7 764.9 L1172.2 764.8 L1174.7 765.9 L1177.2 764.4 L1179.7 765.4 L1182.2 765.4 L1184.7 764.6 L1187.2 766.3 L1189.7 766.7 L1192.2 766.5 L1194.7 767.0 L1197.2 767.4 L1199.7 766.5 L1202.2 767.4 L1204.7 767.7 L1207.2 768.6 L1209.7 768.8 L1212.2 769.1 L1214.7 769.0 L1217.2 769.8 L1219.7 769.7 L1222.2 770.0 L1224.7 769.4 L1227.2 769.4 L1229.7 769.5 L1232.2 769.8 L1234.7 769.1 L1237.2 770.3 L1239.7 769.6 L1242.2 769.6 L1244.7 769.4 L1247.2 769.3 L1249.7 768.8 L1252.2 767.7 L1254.7 769.0 L1257.2 768.7 L1259.7 768.1 L1262.2 768.0 L1264.7 768.1 L1267.2 766.8 L1269.7 767.9 L1272.2 767.0 L1274.7 766.6 L1277.2 766.9 L1279.7 767.7 L1282.2 766.7 L1284.7 767.6 L1287.2 768.0 L1289.7 767.1 L1292.2 766.8 L1294.7 766.9 L1297.2 767.2 L1299.7 767.3 L1302.2 767.0 L1304.7 767.0 L1307.2 765.9 L1309.7 766.0 L1312.2 766.2 L1314.7 766.8 L1317.2 765.7 L1319.7 765.9 L1322.2 764.6 L1324.7 764.4 L1327.2 764.4 L1329.7 764.9 L1332.2 764.6 L1334.7 764.3 L1337.2 763.3 L1339.7 763.4 L1342.2 763.0 L1344.7 762.7 L1347.2 761.8 L1349.7 763.0 L1352.2 761.6 L1354.7 762.9 L1357.2 762.6 L1359.7 760.8 L1362.2 761.5 L1364.7 762.0 L1367.2 762.1 L1369.7 761.0 L1372.2 760.5 L1374.7 760.2 L1377.2 761.4 L1379.7 759.9 L1382.2 760.4 L1384.7 759.5 L1387.2 760.0 L1389.7 760.6 L1392.2 759.0 L1394.7 760.1 L1397.2 759.3 L1399.7 759.9 L1402.2 759.4 L1404.7 758.4 L1407.2 759.6 L1409.7 759.1 L1412.2 758.5 L1414.7 758.7 L1417.2 759.8 L1419.7 760.0 L1422.2 759.9 L1424.7 759.3 L1427.2 759.4 L1429.7 759.0 L1432.2 759.6 L1434.7 757.4 L1437.2 754.9 L1439.7 751.3 L1442.2 746.2 L1444.7 750.5 L1447.2 752.9 L1449.7 756.0 L1452.2 756.0 L1454.7 756.9 L1457.2 757.8 L1459.7 759.8 L1462.2 760.0 L1464.7 760.6 L1467.2 761.8 L1469.7 761.6 L1470 785 L64.7 785 Z" fill="#1e2944" clip-path="url(#selc)"/><path d="M64.7 774.4 L67.2 774.3 L69.7 774.6 L72.2 774.2 L74.7 774.6 L77.2 774.5 L79.7 774.3 L82.2 774.6 L84.7 774.3 L87.2 774.6 L89.7 774.3 L92.2 774.4 L94.7 774.6 L97.2 774.9 L99.7 774.4 L102.2 774.5 L104.7 774.8 L107.2 775.0 L109.7 774.8 L112.2 774.7 L114.7 775.1 L117.2 774.5 L119.7 775.0 L122.2 774.7 L124.7 774.6 L127.2 774.5 L129.7 774.7 L132.2 775.0 L134.7 774.6 L137.2 774.9 L139.7 774.9 L142.2 774.7 L144.7 774.8 L147.2 774.5 L149.7 774.5 L152.2 774.6 L154.7 774.9 L157.2 774.7 L159.7 774.7 L162.2 774.9 L164.7 774.8 L167.2 774.7 L169.7 775.0 L172.2 774.9 L174.7 774.6 L177.2 774.9 L179.7 774.8 L182.2 775.1 L184.7 775.0 L187.2 774.7 L189.7 775.1 L192.2 774.5 L194.7 774.7 L197.2 775.0 L199.7 774.6 L202.2 774.8 L204.7 774.5 L207.2 774.9 L209.7 775.0 L212.2 774.9 L214.7 775.1 L217.2 774.7 L219.7 774.9 L222.2 774.9 L224.7 774.9 L227.2 774.8 L229.7 775.0 L232.2 775.1 L234.7 774.8 L237.2 774.9 L239.7 774.5 L242.2 774.9 L244.7 774.9 L247.2 775.1 L249.7 775.0 L252.2 774.6 L254.7 774.7 L257.2 774.9 L259.7 774.5 L262.2 774.8 L264.7 774.6 L267.2 774.5 L269.7 774.5 L272.2 775.0 L274.7 774.5 L277.2 774.6 L279.7 774.7 L282.2 775.1 L284.7 774.5 L287.2 774.8 L289.7 774.8 L292.2 775.1 L294.7 775.0 L297.2 775.1 L299.7 774.6 L302.2 774.7 L304.7 774.7 L307.2 775.1 L309.7 775.1 L312.2 774.6 L314.7 774.6 L317.2 774.6 L319.7 774.6 L322.2 774.8 L324.7 774.9 L327.2 774.6 L329.7 774.5 L332.2 774.7 L334.7 774.7 L337.2 774.8 L339.7 775.1 L342.2 774.9 L344.7 774.8 L347.2 774.9 L349.7 774.9 L352.2 774.5 L354.7 775.1 L357.2 775.0 L359.7 775.1 L362.2 775.0 L364.7 774.7 L367.2 774.7 L369.7 774.5 L372.2 774.9 L374.7 774.5 L377.2 774.5 L379.7 774.6 L382.2 774.6 L384.7 774.7 L387.2 774.5 L389.7 774.5 L392.2 774.6 L394.7 774.5 L397.2 774.7 L399.7 774.5 L402.2 775.1 L404.7 774.9 L407.2 774.6 L409.7 774.6 L412.2 774.7 L414.7 774.7 L417.2 774.5 L419.7 775.0 L422.2 775.1 L424.7 774.8 L427.2 774.8 L429.7 774.5 L432.2 774.5 L434.7 774.7 L437.2 774.6 L439.7 775.0 L442.2 774.6 L444.7 775.0 L447.2 776.6 L449.7 776.3 L452.2 776.1 L454.7 776.3 L457.2 776.0 L459.7 776.3 L462.2 776.6 L464.7 776.6 L467.2 776.4 L469.7 776.1 L472.2 776.2 L474.7 776.1 L477.2 776.5 L479.7 776.3 L482.2 776.5 L484.7 776.2 L487.2 776.1 L489.7 776.5 L492.2 776.6 L494.7 776.5 L497.2 776.5 L499.7 776.5 L502.2 776.5 L504.7 776.1 L507.2 776.3 L509.7 776.2 L512.2 776.0 L514.7 776.0 L517.2 776.1 L519.7 776.1 L522.2 776.4 L524.7 776.6 L527.2 776.3 L529.7 776.6 L532.2 776.6 L534.7 776.6 L537.2 776.2 L539.7 776.1 L542.2 776.1 L544.7 776.1 L547.2 776.1 L549.7 776.4 L552.2 776.6 L554.7 776.5 L557.2 776.3 L559.7 776.4 L562.2 776.5 L564.7 776.0 L567.2 776.4 L569.7 776.6 L572.2 776.5 L574.7 776.5 L577.2 776.3 L579.7 776.1 L582.2 776.5 L584.7 776.2 L587.2 776.5 L589.7 776.6 L592.2 776.2 L594.7 776.2 L597.2 776.6 L599.7 776.5 L602.2 775.7 L604.7 775.3 L607.2 774.9 L609.7 775.1 L612.2 774.6 L614.7 773.8 L617.2 774.0 L619.7 774.1 L622.2 773.9 L624.7 773.7 L627.2 773.8 L629.7 773.5 L632.2 773.4 L634.7 774.1 L637.2 773.8 L639.7 773.7 L642.2 774.0 L644.7 773.7 L647.2 773.9 L649.7 773.9 L652.2 773.5 L654.7 773.5 L657.2 773.5 L659.7 773.5 L662.2 773.7 L664.7 773.5 L667.2 773.6 L669.7 773.3 L672.2 773.9 L674.7 773.5 L677.2 773.6 L679.7 773.6 L682.2 773.8 L684.7 773.5 L687.2 773.8 L689.7 773.5 L692.2 773.6 L694.7 773.5 L697.2 773.2 L699.7 773.5 L702.2 773.2 L704.7 773.1 L707.2 773.6 L709.7 773.1 L712.2 773.3 L714.7 773.5 L717.2 773.3 L719.7 773.1 L722.2 773.2 L724.7 773.2 L727.2 773.3 L729.7 772.8 L732.2 773.1 L734.7 772.9 L737.2 772.9 L739.7 773.2 L742.2 773.0 L744.7 773.0 L747.2 773.1 L749.7 773.1 L752.2 772.8 L754.7 772.9 L757.2 772.8 L759.7 772.7 L762.2 772.8 L764.7 772.6 L767.2 772.6 L769.7 772.6 L772.2 772.9 L774.7 772.7 L777.2 772.8 L779.7 772.8 L782.2 772.3 L784.7 772.4 L787.2 772.7 L789.7 772.6 L792.2 772.0 L794.7 772.0 L797.2 772.2 L799.7 771.9 L802.2 772.0 L804.7 771.8 L807.2 772.2 L809.7 772.3 L812.2 772.3 L814.7 771.8 L817.2 772.1 L819.7 772.1 L822.2 771.7 L824.7 772.1 L827.2 772.2 L829.7 771.6 L832.2 772.1 L834.7 771.7 L837.2 771.7 L839.7 772.0 L842.2 771.9 L844.7 771.4 L847.2 771.5 L849.7 771.6 L852.2 771.4 L854.7 771.3 L857.2 771.3 L859.7 771.6 L862.2 771.0 L864.7 771.4 L867.2 771.3 L869.7 771.0 L872.2 771.2 L874.7 771.4 L877.2 771.3 L879.7 771.0 L882.2 771.6 L884.7 771.5 L887.2 771.6 L889.7 771.0 L892.2 771.1 L894.7 771.0 L897.2 771.5 L899.7 771.1 L902.2 771.0 L904.7 771.2 L907.2 771.6 L909.7 771.5 L912.2 771.1 L914.7 771.0 L917.2 771.6 L919.7 771.3 L922.2 771.4 L924.7 771.0 L927.2 771.0 L929.7 771.4 L932.2 771.2 L934.7 771.0 L937.2 771.6 L939.7 771.4 L942.2 771.5 L944.7 771.0 L947.2 771.5 L949.7 771.0 L952.2 771.5 L954.7 771.2 L957.2 771.2 L959.7 771.3 L962.2 771.6 L964.7 771.1 L967.2 771.0 L969.7 771.3 L972.2 771.1 L974.7 771.0 L977.2 771.0 L979.7 770.9 L982.2 771.0 L984.7 771.1 L987.2 771.1 L989.7 771.4 L992.2 771.1 L994.7 771.3 L997.2 771.0 L999.7 771.1 L1002.2 770.4 L1004.7 770.9 L1007.2 770.5 L1009.7 771.9 L1012.2 771.6 L1014.7 771.0 L1017.2 771.6 L1019.7 772.5 L1022.2 771.0 L1024.7 772.4 L1027.2 771.7 L1029.7 771.9 L1032.2 772.6 L1034.7 771.8 L1037.2 772.1 L1039.7 772.4 L1042.2 773.0 L1044.7 771.9 L1047.2 772.6 L1049.7 772.2 L1052.2 771.9 L1054.7 771.3 L1057.2 771.0 L1059.7 770.3 L1062.2 770.3 L1064.7 770.0 L1067.2 771.1 L1069.7 770.0 L1072.2 769.5 L1074.7 767.6 L1077.2 768.4 L1079.7 768.0 L1082.2 767.2 L1084.7 766.1 L1087.2 765.6 L1089.7 765.3 L1092.2 765.2 L1094.7 764.2 L1097.2 764.2 L1099.7 763.4 L1102.2 764.2 L1104.7 763.7 L1107.2 762.4 L1109.7 761.5 L1112.2 763.4 L1114.7 762.8 L1117.2 763.5 L1119.7 763.4 L1122.2 764.7 L1124.7 765.5 L1127.2 765.6 L1129.7 765.0 L1132.2 765.5 L1134.7 764.6 L1137.2 765.0 L1139.7 764.7 L1142.2 765.2 L1144.7 764.6 L1147.2 764.5 L1149.7 765.0 L1152.2 764.8 L1154.7 765.4 L1157.2 765.3 L1159.7 765.7 L1162.2 765.5 L1164.7 765.6 L1167.2 765.8 L1169.7 764.9 L1172.2 764.8 L1174.7 765.9 L1177.2 764.4 L1179.7 765.4 L1182.2 765.4 L1184.7 764.6 L1187.2 766.3 L1189.7 766.7 L1192.2 766.5 L1194.7 767.0 L1197.2 767.4 L1199.7 766.5 L1202.2 767.4 L1204.7 767.7 L1207.2 768.6 L1209.7 768.8 L1212.2 769.1 L1214.7 769.0 L1217.2 769.8 L1219.7 769.7 L1222.2 770.0 L1224.7 769.4 L1227.2 769.4 L1229.7 769.5 L1232.2 769.8 L1234.7 769.1 L1237.2 770.3 L1239.7 769.6 L1242.2 769.6 L1244.7 769.4 L1247.2 769.3 L1249.7 768.8 L1252.2 767.7 L1254.7 769.0 L1257.2 768.7 L1259.7 768.1 L1262.2 768.0 L1264.7 768.1 L1267.2 766.8 L1269.7 767.9 L1272.2 767.0 L1274.7 766.6 L1277.2 766.9 L1279.7 767.7 L1282.2 766.7 L1284.7 767.6 L1287.2 768.0 L1289.7 767.1 L1292.2 766.8 L1294.7 766.9 L1297.2 767.2 L1299.7 767.3 L1302.2 767.0 L1304.7 767.0 L1307.2 765.9 L1309.7 766.0 L1312.2 766.2 L1314.7 766.8 L1317.2 765.7 L1319.7 765.9 L1322.2 764.6 L1324.7 764.4 L1327.2 764.4 L1329.7 764.9 L1332.2 764.6 L1334.7 764.3 L1337.2 763.3 L1339.7 763.4 L1342.2 763.0 L1344.7 762.7 L1347.2 761.8 L1349.7 763.0 L1352.2 761.6 L1354.7 762.9 L1357.2 762.6 L1359.7 760.8 L1362.2 761.5 L1364.7 762.0 L1367.2 762.1 L1369.7 761.0 L1372.2 760.5 L1374.7 760.2 L1377.2 761.4 L1379.7 759.9 L1382.2 760.4 L1384.7 759.5 L1387.2 760.0 L1389.7 760.6 L1392.2 759.0 L1394.7 760.1 L1397.2 759.3 L1399.7 759.9 L1402.2 759.4 L1404.7 758.4 L1407.2 759.6 L1409.7 759.1 L1412.2 758.5 L1414.7 758.7 L1417.2 759.8 L1419.7 760.0 L1422.2 759.9 L1424.7 759.3 L1427.2 759.4 L1429.7 759.0 L1432.2 759.6 L1434.7 757.4 L1437.2 754.9 L1439.7 751.3 L1442.2 746.2 L1444.7 750.5 L1447.2 752.9 L1449.7 756.0 L1452.2 756.0 L1454.7 756.9 L1457.2 757.8 L1459.7 759.8 L1462.2 760.0 L1464.7 760.6 L1467.2 761.8 L1469.7 761.6" fill="none" stroke="#2c4a80" stroke-width="1.1"/><rect x="1418.0" y="755.2" width="11.4" height="14.5" rx="5" fill="#3b3d45" opacity="0.92"/><line x1="1422.5" y1="760.5" x2="1422.5" y2="765.2" stroke="#a0a2a6" stroke-width="0.9"/><line x1="1424.9" y1="760.5" x2="1424.9" y2="765.2" stroke="#a0a2a6" stroke-width="0.9"/><rect x="1461.5" y="755.2" width="11.4" height="14.5" rx="5" fill="#3b3d45" opacity="0.92"/><line x1="1466.0" y1="760.5" x2="1466.0" y2="765.2" stroke="#a0a2a6" stroke-width="0.9"/><line x1="1468.4" y1="760.5" x2="1468.4" y2="765.2" stroke="#a0a2a6" stroke-width="0.9"/><rect x="30.6" y="639.3" width="29.3" height="17.2" rx="2" fill="#000"/><rect x="1468.1" y="639.5" width="40.5" height="16.5" rx="2" fill="#000"/><rect x="1412" y="722.8" width="90.6" height="16.5" rx="2" fill="#000"/></svg>
<span class="t" style="left:9.15px;top:0.89px;font-size:13.29px;font-weight:400;color:#f2f2f2;transform:scaleX(0.9874)">Monero XMR Derivatives Data Analysis</span>
<span class="t" style="left:1352.14px;top:1.64px;font-size:12.00px;font-weight:700;color:#ffffff;transform:scaleX(0.9114)">Long</span>
<span class="t" style="left:1410.47px;top:1.64px;font-size:12.00px;font-weight:700;color:#ffffff;transform:scaleX(0.9435)">Short</span>
<span class="t" style="left:1473.09px;top:1.64px;font-size:12.00px;font-weight:700;color:#ffffff;transform:scaleX(0.9499)">Trade</span>
<span class="t" style="left:19.20px;top:54.07px;font-size:11.14px;font-weight:400;color:#e6e7e9;transform:scaleX(0.9738);-webkit-text-stroke:0.25px #e6e7e9">Volume</span>
<span class="t" style="left:18.77px;top:96.57px;font-size:11.14px;font-weight:400;color:#e6e7e9;transform:scaleX(0.9748);-webkit-text-stroke:0.25px #e6e7e9">Open Interest</span>
<span class="t" style="left:18.77px;top:139.57px;font-size:11.14px;font-weight:400;color:#e6e7e9;transform:scaleX(0.9638);-webkit-text-stroke:0.25px #e6e7e9">Options Volume</span>
<span class="t" style="left:18.77px;top:182.57px;font-size:11.14px;font-weight:400;color:#e6e7e9;transform:scaleX(0.9669);-webkit-text-stroke:0.25px #e6e7e9">Options Open Interest</span>
<span class="t" style="left:249.17px;top:53.83px;font-size:11.43px;font-weight:400;color:#e83a46;transform:scaleX(0.9407);-webkit-text-stroke:0.25px #e83a46">-16.68%</span>
<span class="t" style="left:305.20px;top:53.83px;font-size:11.43px;font-weight:400;color:#e6e7e9;transform:scaleX(0.9081);-webkit-text-stroke:0.25px #e6e7e9">$281.47M</span>
<span class="t" style="left:255.17px;top:96.63px;font-size:11.43px;font-weight:400;color:#e83a46;transform:scaleX(0.9401);-webkit-text-stroke:0.25px #e83a46">-5.12%</span>
<span class="t" style="left:305.20px;top:96.63px;font-size:11.43px;font-weight:400;color:#e6e7e9;transform:scaleX(0.9081);-webkit-text-stroke:0.25px #e6e7e9">$135.18M</span>
<span class="t" style="left:402.75px;top:53.72px;font-size:10.86px;font-weight:400;color:#e6e7e9;transform:scaleX(0.9820);-webkit-text-stroke:0.25px #e6e7e9">Long/Short (24h)</span>
<span class="t" style="left:701.22px;top:53.72px;font-size:10.86px;font-weight:400;color:#2bb898;transform:scaleX(1.0205);-webkit-text-stroke:0.25px #2bb898">1.0929</span>
<span class="t" style="left:402.88px;top:87.96px;font-size:10.57px;font-weight:400;color:#e6e7e9;transform:scaleX(0.9677);-webkit-text-stroke:0.25px #e6e7e9">Binance XMR/USDT</span>
<span class="t" style="left:402.90px;top:104.65px;font-size:10.00px;font-weight:400;color:#a3a5a9;transform:scaleX(0.9974);-webkit-text-stroke:0.25px #a3a5a9">Long/Short Ratio(Accounts)</span>
<span class="t" style="left:701.67px;top:95.92px;font-size:10.86px;font-weight:400;color:#2bb898;transform:scaleX(1.0068);-webkit-text-stroke:0.25px #2bb898">0.8152</span>
<span class="t" style="left:403.31px;top:131.26px;font-size:10.57px;font-weight:400;color:#e6e7e9;transform:scaleX(0.9147);-webkit-text-stroke:0.25px #e6e7e9">OKX XMR</span>
<span class="t" style="left:402.90px;top:147.65px;font-size:10.00px;font-weight:400;color:#a3a5a9;transform:scaleX(0.9974);-webkit-text-stroke:0.25px #a3a5a9">Long/Short Ratio(Accounts)</span>
<span class="t" style="left:402.88px;top:174.06px;font-size:10.57px;font-weight:400;color:#e6e7e9;transform:scaleX(0.9677);-webkit-text-stroke:0.25px #e6e7e9">Binance XMR/USDT</span>
<span class="t" style="left:403.50px;top:190.55px;font-size:10.00px;font-weight:400;color:#a3a5a9;transform:scaleX(0.9931);-webkit-text-stroke:0.25px #a3a5a9">Top Trader Long/Short (Accounts)</span>
<span class="t" style="left:701.67px;top:181.92px;font-size:10.86px;font-weight:400;color:#2bb898;transform:scaleX(1.0034);-webkit-text-stroke:0.25px #2bb898">0.8265</span>
<span class="t" style="left:402.88px;top:216.86px;font-size:10.57px;font-weight:400;color:#e6e7e9;transform:scaleX(0.9677);-webkit-text-stroke:0.25px #e6e7e9">Binance XMR/USDT</span>
<span class="t" style="left:403.50px;top:233.35px;font-size:10.00px;font-weight:400;color:#a3a5a9;transform:scaleX(0.9921);-webkit-text-stroke:0.25px #a3a5a9">Top Trader Long/Short (Positions)</span>
<span class="t" style="left:701.67px;top:224.32px;font-size:10.86px;font-weight:400;color:#2bb898;transform:scaleX(1.0068);-webkit-text-stroke:0.25px #2bb898">0.7997</span>
<span class="t" style="left:778.68px;top:50.27px;font-size:11.14px;font-weight:400;color:#b9bbbe;transform:scaleX(0.9191);-webkit-text-stroke:0.25px #b9bbbe">1h Rekt</span>
<span class="t" style="left:966.50px;top:50.17px;font-size:11.14px;font-weight:400;color:#f4f4f4;transform:scaleX(0.9224);-webkit-text-stroke:0.25px #f4f4f4">$7.79K</span>
<span class="t" style="left:778.56px;top:80.47px;font-size:11.14px;font-weight:400;color:#b9bbbe;transform:scaleX(0.9411);-webkit-text-stroke:0.25px #b9bbbe">Long</span>
<span class="t" style="left:966.50px;top:80.47px;font-size:11.14px;font-weight:400;color:#2bb898;transform:scaleX(0.9224);-webkit-text-stroke:0.25px #2bb898">$7.09K</span>
<span class="t" style="left:778.98px;top:110.97px;font-size:11.14px;font-weight:400;color:#b9bbbe;transform:scaleX(0.9385);-webkit-text-stroke:0.25px #b9bbbe">Short</span>
<span class="t" style="left:961.80px;top:110.97px;font-size:11.14px;font-weight:400;color:#e83a46;transform:scaleX(0.9356);-webkit-text-stroke:0.25px #e83a46">$696.59</span>
<span class="t" style="left:1035.20px;top:50.27px;font-size:11.14px;font-weight:400;color:#b9bbbe;transform:scaleX(0.9057);-webkit-text-stroke:0.25px #b9bbbe">4h Rekt</span>
<span class="t" style="left:1217.00px;top:50.17px;font-size:11.14px;font-weight:400;color:#f4f4f4;transform:scaleX(0.9171);-webkit-text-stroke:0.25px #f4f4f4">$10.19K</span>
<span class="t" style="left:1034.56px;top:80.47px;font-size:11.14px;font-weight:400;color:#b9bbbe;transform:scaleX(0.9411);-webkit-text-stroke:0.25px #b9bbbe">Long</span>
<span class="t" style="left:1222.50px;top:80.47px;font-size:11.14px;font-weight:400;color:#2bb898;transform:scaleX(0.9224);-webkit-text-stroke:0.25px #2bb898">$8.23K</span>
<span class="t" style="left:1034.98px;top:110.97px;font-size:11.14px;font-weight:400;color:#b9bbbe;transform:scaleX(0.9385);-webkit-text-stroke:0.25px #b9bbbe">Short</span>
<span class="t" style="left:1222.50px;top:110.97px;font-size:11.14px;font-weight:400;color:#e83a46;transform:scaleX(0.9224);-webkit-text-stroke:0.25px #e83a46">$1.95K</span>
<span class="t" style="left:778.69px;top:167.27px;font-size:11.14px;font-weight:400;color:#b9bbbe;transform:scaleX(0.9124);-webkit-text-stroke:0.25px #b9bbbe">12h Rekt</span>
<span class="t" style="left:955.30px;top:167.17px;font-size:11.14px;font-weight:400;color:#f4f4f4;transform:scaleX(0.9175);-webkit-text-stroke:0.25px #f4f4f4">$349.75K</span>
<span class="t" style="left:778.56px;top:197.47px;font-size:11.14px;font-weight:400;color:#b9bbbe;transform:scaleX(0.9411);-webkit-text-stroke:0.25px #b9bbbe">Long</span>
<span class="t" style="left:955.30px;top:197.47px;font-size:11.14px;font-weight:400;color:#2bb898;transform:scaleX(0.9175);-webkit-text-stroke:0.25px #2bb898">$338.21K</span>
<span class="t" style="left:778.98px;top:227.97px;font-size:11.14px;font-weight:400;color:#b9bbbe;transform:scaleX(0.9385);-webkit-text-stroke:0.25px #b9bbbe">Short</span>
<span class="t" style="left:961.00px;top:227.97px;font-size:11.14px;font-weight:400;color:#e83a46;transform:scaleX(0.9359);-webkit-text-stroke:0.25px #e83a46">$11.54K</span>
<span class="t" style="left:1034.89px;top:167.27px;font-size:11.14px;font-weight:400;color:#b9bbbe;transform:scaleX(0.9077);-webkit-text-stroke:0.25px #b9bbbe">24h Rekt</span>
<span class="t" style="left:1211.30px;top:167.17px;font-size:11.14px;font-weight:400;color:#f4f4f4;transform:scaleX(0.9175);-webkit-text-stroke:0.25px #f4f4f4">$583.61K</span>
<span class="t" style="left:1034.56px;top:197.47px;font-size:11.14px;font-weight:400;color:#b9bbbe;transform:scaleX(0.9411);-webkit-text-stroke:0.25px #b9bbbe">Long</span>
<span class="t" style="left:1211.30px;top:197.47px;font-size:11.14px;font-weight:400;color:#2bb898;transform:scaleX(0.9175);-webkit-text-stroke:0.25px #2bb898">$518.34K</span>
<span class="t" style="left:1034.98px;top:227.97px;font-size:11.14px;font-weight:400;color:#b9bbbe;transform:scaleX(0.9385);-webkit-text-stroke:0.25px #b9bbbe">Short</span>
<span class="t" style="left:1217.00px;top:227.97px;font-size:11.14px;font-weight:400;color:#e83a46;transform:scaleX(0.9171);-webkit-text-stroke:0.25px #e83a46">$65.27K</span>
<span class="t" style="left:1298.69px;top:54.32px;font-size:10.86px;font-weight:400;color:#c9cacc;transform:scaleX(0.9875);-webkit-text-stroke:0.25px #c9cacc">Trending</span>
<span class="t" style="left:1322.39px;top:96.62px;font-size:10.86px;font-weight:700;color:#eeeeee;transform:scaleX(0.9395)">Binance</span>
<span class="t" style="left:1322.51px;top:139.62px;font-size:10.86px;font-weight:700;color:#eeeeee;transform:scaleX(0.9080)">OKX</span>
<span class="t" style="left:1322.28px;top:182.72px;font-size:10.86px;font-weight:700;color:#eeeeee;transform:scaleX(0.9524)">Bybit</span>
<span class="t" style="left:1322.28px;top:225.52px;font-size:10.86px;font-weight:700;color:#eeeeee;transform:scaleX(0.9566)">Bitfinex</span>
<span class="t" style="left:10.70px;top:284.34px;font-size:12.00px;font-weight:700;color:#ffffff;transform:scaleX(0.9247)">Weighted Funding Rate</span>
<span class="t" style="left:168.84px;top:284.34px;font-size:12.00px;font-weight:700;color:#e4e4e4;transform:scaleX(0.9618)">Open Interest</span>
<span class="t" style="left:278.30px;top:284.34px;font-size:12.00px;font-weight:700;color:#e4e4e4;transform:scaleX(0.9422)">Volume</span>
<span class="t" style="left:352.52px;top:284.34px;font-size:12.00px;font-weight:700;color:#e4e4e4;transform:scaleX(0.9430)">Liquidation</span>
<span class="t" style="left:-2.70px;top:321.81px;font-size:18.00px;font-weight:700;color:#f4f4f4;transform:scaleX(0.8957)">XMR OI-Weighted Funding Rate</span>
<span class="t" style="left:1358.68px;top:325.57px;font-size:11.14px;font-weight:400;color:#e8e8e8;transform:scaleX(0.9764);-webkit-text-stroke:0.25px #e8e8e8">XMR</span>
<span class="t" style="left:1451.05px;top:325.57px;font-size:11.14px;font-weight:400;color:#e8e8e8;transform:scaleX(1.0602);-webkit-text-stroke:0.25px #e8e8e8">30 minute</span>
<span class="t" style="left:705.01px;top:363.35px;font-size:10.00px;font-weight:400;color:#dcdcdc;transform:scaleX(0.9381);-webkit-text-stroke:0.25px #dcdcdc">XMR Price</span>
<span class="t" style="left:773.10px;top:363.35px;font-size:10.00px;font-weight:400;color:#dcdcdc;transform:scaleX(1.0093);-webkit-text-stroke:0.25px #dcdcdc">OI-Weighted</span>
<span class="t" style="left:19.12px;top:385.85px;font-size:10.00px;font-weight:400;color:#b4b5b8;transform:scaleX(0.9386);-webkit-text-stroke:0.25px #b4b5b8">0.0800%</span>
<span class="t" style="left:19.12px;top:451.85px;font-size:10.00px;font-weight:400;color:#b4b5b8;transform:scaleX(0.9386);-webkit-text-stroke:0.25px #b4b5b8">0.0600%</span>
<span class="t" style="left:19.12px;top:517.85px;font-size:10.00px;font-weight:400;color:#b4b5b8;transform:scaleX(0.9386);-webkit-text-stroke:0.25px #b4b5b8">0.0400%</span>
<span class="t" style="left:19.12px;top:583.85px;font-size:10.00px;font-weight:400;color:#b4b5b8;transform:scaleX(0.9386);-webkit-text-stroke:0.25px #b4b5b8">0.0200%</span>
<span class="t" style="left:15.02px;top:715.85px;font-size:10.00px;font-weight:400;color:#b4b5b8;transform:scaleX(0.9616);-webkit-text-stroke:0.25px #b4b5b8">-0.0200%</span>
<span class="t" style="left:1472.90px;top:386.05px;font-size:10.00px;font-weight:400;color:#b4b5b8;transform:scaleX(0.9667);-webkit-text-stroke:0.25px #b4b5b8">$791.27</span>
<span class="t" style="left:1472.90px;top:452.05px;font-size:10.00px;font-weight:400;color:#b4b5b8;transform:scaleX(0.9640);-webkit-text-stroke:0.25px #b4b5b8">$700.00</span>
<span class="t" style="left:1472.90px;top:524.05px;font-size:10.00px;font-weight:400;color:#b4b5b8;transform:scaleX(0.9640);-webkit-text-stroke:0.25px #b4b5b8">$600.00</span>
<span class="t" style="left:1472.90px;top:596.05px;font-size:10.00px;font-weight:400;color:#b4b5b8;transform:scaleX(0.9640);-webkit-text-stroke:0.25px #b4b5b8">$500.00</span>
<span class="t" style="left:1472.90px;top:668.05px;font-size:10.00px;font-weight:400;color:#b4b5b8;transform:scaleX(0.9640);-webkit-text-stroke:0.25px #b4b5b8">$400.00</span>
<span class="t" style="left:1472.90px;top:715.55px;font-size:10.00px;font-weight:400;color:#b4b5b8;transform:scaleX(0.9640);-webkit-text-stroke:0.25px #b4b5b8">$334.85</span>
<span class="t" style="left:86.20px;top:726.95px;font-size:10.00px;font-weight:400;color:#b4b5b8;transform:scaleX(0.9999);-webkit-text-stroke:0.25px #b4b5b8">2 Jan</span>
<span class="t" style="left:129.37px;top:726.95px;font-size:10.00px;font-weight:400;color:#b4b5b8;transform:scaleX(0.9915);-webkit-text-stroke:0.25px #b4b5b8">3 Jan</span>
<span class="t" style="left:172.44px;top:726.95px;font-size:10.00px;font-weight:400;color:#b4b5b8;transform:scaleX(0.9873);-webkit-text-stroke:0.25px #b4b5b8">4 Jan</span>
<span class="t" style="left:215.21px;top:726.95px;font-size:10.00px;font-weight:400;color:#b4b5b8;transform:scaleX(0.9957);-webkit-text-stroke:0.25px #b4b5b8">5 Jan</span>
<span class="t" style="left:258.08px;top:726.95px;font-size:10.00px;font-weight:400;color:#b4b5b8;transform:scaleX(0.9999);-webkit-text-stroke:0.25px #b4b5b8">6 Jan</span>
<span class="t" style="left:301.05px;top:726.95px;font-size:10.00px;font-weight:400;color:#b4b5b8;transform:scaleX(0.9999);-webkit-text-stroke:0.25px #b4b5b8">7 Jan</span>
<span class="t" style="left:344.12px;top:726.95px;font-size:10.00px;font-weight:400;color:#b4b5b8;transform:scaleX(0.9957);-webkit-text-stroke:0.25px #b4b5b8">8 Jan</span>
<span class="t" style="left:387.09px;top:726.95px;font-size:10.00px;font-weight:400;color:#b4b5b8;transform:scaleX(0.9957);-webkit-text-stroke:0.25px #b4b5b8">9 Jan</span>
<span class="t" style="left:427.37px;top:726.95px;font-size:10.00px;font-weight:400;color:#b4b5b8;transform:scaleX(0.9804);-webkit-text-stroke:0.25px #b4b5b8">10 Jan</span>
<span class="t" style="left:470.33px;top:726.95px;font-size:10.00px;font-weight:400;color:#b4b5b8;transform:scaleX(1.0064);-webkit-text-stroke:0.25px #b4b5b8">11 Jan</span>
<span class="t" style="left:513.31px;top:726.95px;font-size:10.00px;font-weight:400;color:#b4b5b8;transform:scaleX(0.9804);-webkit-text-stroke:0.25px #b4b5b8">12 Jan</span>
<span class="t" style="left:556.28px;top:726.95px;font-size:10.00px;font-weight:400;color:#b4b5b8;transform:scaleX(0.9804);-webkit-text-stroke:0.25px #b4b5b8">13 Jan</span>
<span class="t" style="left:599.25px;top:726.95px;font-size:10.00px;font-weight:400;color:#b4b5b8;transform:scaleX(0.9804);-webkit-text-stroke:0.25px #b4b5b8">14 Jan</span>
<span class="t" style="left:642.22px;top:726.95px;font-size:10.00px;font-weight:400;color:#b4b5b8;transform:scaleX(0.9804);-webkit-text-stroke:0.25px #b4b5b8">15 Jan</span>
<span class="t" style="left:685.19px;top:726.95px;font-size:10.00px;font-weight:400;color:#b4b5b8;transform:scaleX(0.9804);-webkit-text-stroke:0.25px #b4b5b8">16 Jan</span>
<span class="t" style="left:728.16px;top:726.95px;font-size:10.00px;font-weight:400;color:#b4b5b8;transform:scaleX(0.9804);-webkit-text-stroke:0.25px #b4b5b8">17 Jan</span>
<span class="t" style="left:771.13px;top:726.95px;font-size:10.00px;font-weight:400;color:#b4b5b8;transform:scaleX(0.9804);-webkit-text-stroke:0.25px #b4b5b8">18 Jan</span>
<span class="t" style="left:814.10px;top:726.95px;font-size:10.00px;font-weight:400;color:#b4b5b8;transform:scaleX(0.9804);-webkit-text-stroke:0.25px #b4b5b8">19 Jan</span>
<span class="t" style="left:857.27px;top:726.95px;font-size:10.00px;font-weight:400;color:#b4b5b8;transform:scaleX(0.9737);-webkit-text-stroke:0.25px #b4b5b8">20 Jan</span>
<span class="t" style="left:900.24px;top:726.95px;font-size:10.00px;font-weight:400;color:#b4b5b8;transform:scaleX(0.9737);-webkit-text-stroke:0.25px #b4b5b8">21 Jan</span>
<span class="t" style="left:943.21px;top:726.95px;font-size:10.00px;font-weight:400;color:#b4b5b8;transform:scaleX(0.9737);-webkit-text-stroke:0.25px #b4b5b8">22 Jan</span>
<span class="t" style="left:986.18px;top:726.95px;font-size:10.00px;font-weight:400;color:#b4b5b8;transform:scaleX(0.9737);-webkit-text-stroke:0.25px #b4b5b8">23 Jan</span>
<span class="t" style="left:1029.15px;top:726.95px;font-size:10.00px;font-weight:400;color:#b4b5b8;transform:scaleX(0.9737);-webkit-text-stroke:0.25px #b4b5b8">24 Jan</span>
<span class="t" style="left:1072.12px;top:726.95px;font-size:10.00px;font-weight:400;color:#b4b5b8;transform:scaleX(0.9737);-webkit-text-stroke:0.25px #b4b5b8">25 Jan</span>
<span class="t" style="left:1115.09px;top:726.95px;font-size:10.00px;font-weight:400;color:#b4b5b8;transform:scaleX(0.9737);-webkit-text-stroke:0.25px #b4b5b8">26 Jan</span>
<span class="t" style="left:1158.06px;top:726.95px;font-size:10.00px;font-weight:400;color:#b4b5b8;transform:scaleX(0.9737);-webkit-text-stroke:0.25px #b4b5b8">27 Jan</span>
<span class="t" style="left:1201.03px;top:726.95px;font-size:10.00px;font-weight:400;color:#b4b5b8;transform:scaleX(0.9737);-webkit-text-stroke:0.25px #b4b5b8">28 Jan</span>
<span class="t" style="left:1244.00px;top:726.95px;font-size:10.00px;font-weight:400;color:#b4b5b8;transform:scaleX(0.9737);-webkit-text-stroke:0.25px #b4b5b8">29 Jan</span>
<span class="t" style="left:36.10px;top:642.92px;font-size:10.86px;font-weight:400;color:#ffffff;transform:scaleX(0.9112);-webkit-text-stroke:0.25px #ffffff">0.00</span>
<span class="t" style="left:1474.31px;top:642.92px;font-size:10.86px;font-weight:400;color:#ffffff;transform:scaleX(0.8866);-webkit-text-stroke:0.25px #ffffff">435.03</span>
<span class="t" style="left:1419.71px;top:727.35px;font-size:10.00px;font-weight:400;color:#ffffff;transform:scaleX(0.9601);-webkit-text-stroke:0.25px #ffffff">3 Feb 2026, 13:30</span>
<div style="position:absolute;left:1275px;top:664.6px;width:167.8px;height:82.4px;background:#05060a;border-radius:4px;box-shadow:0 0 18px rgba(0,0,0,0.6)"></div>
<svg width="1536" height="785" viewBox="0 0 1536 785"><circle cx="1290.2" cy="711.5" r="4.2" fill="#d6d6da"/><circle cx="1290.2" cy="729.6" r="4.2" fill="#2db52d"/></svg>
<span class="t" style="left:1441.60px;top:694.55px;font-size:10.00px;font-weight:400;color:#b4b5b8;transform:scaleX(1.1112);-webkit-text-stroke:0.25px #b4b5b8">ISS</span>
<span class="t" style="left:1286.04px;top:678.82px;font-size:13.43px;font-weight:400;color:#ffffff;transform:scaleX(0.8860);-webkit-text-stroke:0.25px #ffffff">3 Feb 2026, 13:30</span>
<span class="t" style="left:1297.66px;top:704.92px;font-size:13.43px;font-weight:400;color:#e0e0e0;transform:scaleX(0.8815);-webkit-text-stroke:0.25px #e0e0e0">XMR Price</span>
<span class="t" style="left:1387.18px;top:704.92px;font-size:13.43px;font-weight:400;color:#ffffff;transform:scaleX(0.8973);-webkit-text-stroke:0.25px #ffffff">$372.05</span>
<span class="t" style="left:1297.39px;top:723.02px;font-size:13.43px;font-weight:400;color:#e0e0e0;transform:scaleX(0.9439);-webkit-text-stroke:0.25px #e0e0e0">OI-Weighted</span>
<span class="t" style="left:1384.35px;top:723.02px;font-size:13.43px;font-weight:400;color:#ffffff;transform:scaleX(0.8733);-webkit-text-stroke:0.25px #ffffff">0.0076%</span>
</body></html>
